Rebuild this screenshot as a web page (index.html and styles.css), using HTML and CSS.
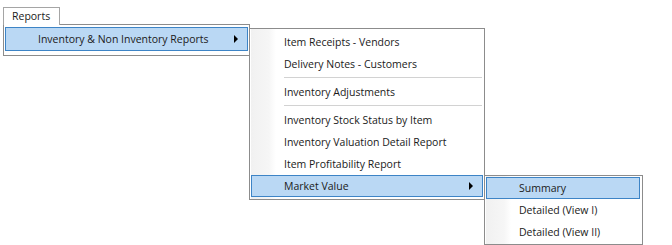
FILE: index.html
```html
<!DOCTYPE html>
<html>
<head>
<meta charset="utf-8">
<link rel="stylesheet" href="styles.css">
</head>
<body>
<div class="page">
  <div class="tab">Reports</div>
  <div class="menu menu1">
    <div class="item sel">Inventory &amp; Non Inventory Reports<span class="arrow"></span></div>
  </div>
  <div class="menu menu2">
    <div class="item">Item Receipts - Vendors</div>
    <div class="item">Delivery Notes - Customers</div>
    <div class="sep"></div>
    <div class="item">Inventory Adjustments</div>
    <div class="sep"></div>
    <div class="item">Inventory Stock Status by Item</div>
    <div class="item">Inventory Valuation Detail Report</div>
    <div class="item">Item Profitability Report</div>
    <div class="item sel">Market Value<span class="arrow"></span></div>
  </div>
  <div class="menu menu3">
    <div class="item sel">Summary</div>
    <div class="item">Detailed (View I)</div>
    <div class="item">Detailed (View II)</div>
  </div>
</div>
</body>
</html>
```
FILE: styles.css
```css
html, body {
  margin: 0;
  padding: 0;
  background: #fff;
}
.page {
  position: relative;
  width: 672px;
  height: 245px;
  box-sizing: border-box;
  padding: 7px 0 0 3px;
  font-family: "Open Sans", "DejaVu Sans", sans-serif;
  font-size: 10.5px;
  color: #1a1a1a;
}
.tab {
  position: relative;
  z-index: 2;
  width: 57px;
  height: 18px;
  box-sizing: border-box;
  border: 1px solid #a5a5a5;
  border-bottom: none;
  background: #fff;
  padding-left: 8px;
  line-height: 17px;
}
.menu {
  position: absolute;
  box-sizing: border-box;
  border: 1px solid #8c8c8c;
  background: #fff;
  display: flex;
  flex-direction: column;
}
.menu1 {
  left: 3px;
  top: 24px;
  width: 247px;
  height: 32px;
  padding: 2px 1px;
  z-index: 1;
}
.menu1 .item {
  height: 24px;
  line-height: 22px;
}
.menu2 {
  left: 249px;
  top: 28px;
  width: 236px;
  height: 172px;
  padding: 2px 1px;
  z-index: 3;
  background: linear-gradient(to right, #f1f1f1 0, #f6f6f6 18px, #fff 25px) no-repeat 1px 0 / 25px 100%, #fff;
}
.menu3 {
  left: 484px;
  top: 175px;
  width: 159px;
  height: 70px;
  padding: 1px 2px 1px 1px;
  z-index: 4;
  background: linear-gradient(to right, #f1f1f1 0, #f6f6f6 18px, #fff 25px) no-repeat 1px 0 / 25px 100%, #fff;
}
.item {
  display: flex;
  align-items: center;
  height: 22px;
  line-height: 20px;
  box-sizing: border-box;
  border: 1px solid transparent;
  padding-left: 32px;
  white-space: nowrap;
}
.item.sel {
  background: #bad8f4;
  border-color: #3d84c6;
}
.arrow {
  margin-left: auto;
  margin-right: 9px;
  width: 0;
  height: 0;
  border-left: 4px solid #000;
  border-top: 4px solid transparent;
  border-bottom: 4px solid transparent;
}
.sep {
  height: 6px;
  margin-left: 33px;
  margin-right: 1px;
  box-sizing: border-box;
  padding-top: 2px;
}
.sep::before {
  content: "";
  display: block;
  height: 1px;
  background: #d2d2d2;
}
```
